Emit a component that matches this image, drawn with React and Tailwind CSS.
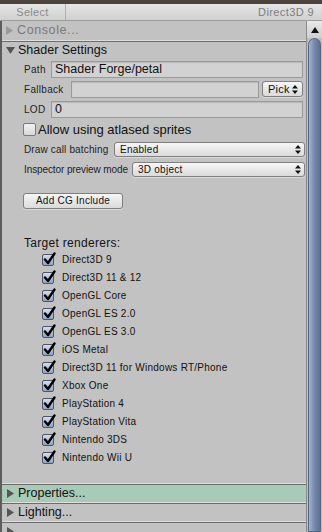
import React from 'react';

const RENDERERS = [
  'Direct3D 9',
  'Direct3D 11 & 12',
  'OpenGL Core',
  'OpenGL ES 2.0',
  'OpenGL ES 3.0',
  'iOS Metal',
  'Direct3D 11 for Windows RT/Phone',
  'Xbox One',
  'PlayStation 4',
  'PlayStation Vita',
  'Nintendo 3DS',
  'Nintendo Wii U',
];

function Tri({ down, color = '#555' }) {
  return down ? (
    <svg width="9" height="9" viewBox="0 0 9 9" className="shrink-0">
      <path d="M0 1 L9 1 L4.5 8 Z" fill={color} />
    </svg>
  ) : (
    <svg width="9" height="9" viewBox="0 0 9 9" className="shrink-0">
      <path d="M1 0 L8 4.5 L1 9 Z" fill={color} />
    </svg>
  );
}

function UpDown() {
  return (
    <svg width="6" height="9" viewBox="0 0 6 9" className="shrink-0">
      <path d="M3 0 L6 3.5 L0 3.5 Z" fill="#111" />
      <path d="M3 9 L6 5.5 L0 5.5 Z" fill="#111" />
    </svg>
  );
}

function Check() {
  return (
    <div className="relative w-[12px] h-[12px] rounded-[2px] border border-[#4d5566] bg-gradient-to-b from-[#d4deee] to-[#8ea4c4] shrink-0">
      <svg width="14" height="14" viewBox="0 0 14 14" className="absolute left-[0px] top-[-3px]">
        <path d="M2 7.5 L5 11 L11.5 1.5" fill="none" stroke="#000" strokeWidth="2.4" strokeLinecap="round" strokeLinejoin="round" />
      </svg>
    </div>
  );
}

function Foldout({ label, open, green }) {
  return (
    <div className={`border-t border-t-[#dedede] ${green ? 'bg-[#a8cbb7]' : ''}`}>
      <div className="border-t border-t-[#6c6c6c] h-[18px] flex items-center gap-[3px] pl-[4px]">
        <Tri down={open} color="#555" />
        <span className="text-[12.5px] text-[#111] whitespace-nowrap">{label}</span>
      </div>
    </div>
  );
}

const labelCls = 'shrink-0 whitespace-nowrap overflow-hidden text-[10px] text-[#222] pl-[1px]';
const inputCls = 'h-[17px] min-w-0 border border-[#9a9a9a] bg-[#d2d2d2] shadow-[inset_0_1px_1px_rgba(0,0,0,0.12)] flex items-center px-[3px] text-[12.5px] text-[#111] whitespace-nowrap';
const btnCls = 'shrink-0 rounded-[3px] border border-[#7f7f7f] bg-gradient-to-b from-[#f6f6f6] to-[#dadada] shadow-[0_1px_0_rgba(255,255,255,0.4)] flex items-center text-[10px] tracking-[0.25px] text-[#111] whitespace-nowrap';

export default function App() {
  return (
    <div className="w-[322px] h-[532px] overflow-hidden flex flex-col bg-[#c2c2c2] font-['Liberation_Sans',Arial,sans-serif] select-none">
      <div className="h-[4px] bg-[#4b433c] shrink-0" />
      <div className="h-[17px] shrink-0 flex items-center bg-gradient-to-b from-[#e6e6e6] to-[#d0d0d0] border-b border-[#9d9d9d]">
        <div className="w-[66px] h-full flex items-center justify-center border-r border-[#b0b0b0] text-[11px] text-[#8a8a8a] tracking-[0.3px]">Select</div>
        <div className="flex-1 text-right pr-[8px] text-[11px] text-[#7d7d7d] tracking-[0.4px]">Direct3D 9</div>
      </div>
      <div className="flex-1 flex min-h-0">
        <div className="flex-1 flex flex-col border-l-2 border-[#5d5d5d] min-w-0">
          <div className="h-[20px] flex items-center gap-[3px] pl-[3px]">
            <Tri color="#9a9a9a" />
            <span className="text-[12.5px] text-[#7a7a7a] tracking-[0.6px]">Console...</span>
          </div>
          <Foldout label="Shader Settings" open />
          <div className="flex flex-col pl-[21px] pr-[3px] pt-[2px]">
            <div className="flex items-center h-[17px]">
              <span className={`${labelCls} w-[28px] tracking-[0.3px]`}>Path</span>
              <div className={`${inputCls} flex-1`}>Shader Forge/petal</div>
            </div>
            <div className="flex items-center h-[17px] mt-[3px]">
              <span className={`${labelCls} w-[48px] tracking-[0.3px]`}>Fallback</span>
              <div className={`${inputCls} flex-1`} />
              <div className={`${btnCls} ml-[3px] w-[41px] h-[16px] justify-between pl-[5px] pr-[4px] text-[11px]`}>
                <span>Pick</span>
                <UpDown />
              </div>
            </div>
            <div className="flex items-center h-[17px] mt-[3px]">
              <span className={`${labelCls} w-[28px] tracking-[0.3px]`}>LOD</span>
              <div className={`${inputCls} flex-1`}>0</div>
            </div>
            <div className="flex items-center h-[16px] mt-[4px] gap-[2px]">
              <div className="w-[13px] h-[13px] shrink-0 rounded-[2px] border border-[#7a7a7a] bg-gradient-to-b from-[#f2f2f2] to-[#d8d8d8]" />
              <span className="text-[13px] text-[#111] whitespace-nowrap">Allow using atlased sprites</span>
            </div>
            <div className="flex items-center h-[15px] mt-[4px]">
              <span className={`${labelCls} w-[91px] tracking-[0.15px]`}>Draw call batching</span>
              <div className={`${btnCls} flex-1 h-[15px] justify-between pl-[5px] pr-[3px] mr-[-2px]`}>
                <span>Enabled</span>
                <UpDown />
              </div>
            </div>
            <div className="flex items-center h-[15px] mt-[5px]">
              <span className={`${labelCls} w-[109px] tracking-[-0.1px]`}>Inspector preview mode</span>
              <div className={`${btnCls} flex-1 h-[15px] justify-between pl-[5px] pr-[3px] mr-[-2px]`}>
                <span>3D object</span>
                <UpDown />
              </div>
            </div>
            <div className={`${btnCls} w-[100px] h-[16px] justify-center mt-[16px]`}>Add CG Include</div>
            <div className="mt-[27px] text-[12px] text-[#111] tracking-[0.3px] pl-[1px] leading-[14px]">Target renderers:</div>
            <div className="flex flex-col mt-[1px] pl-[19px]">
              {RENDERERS.map(r => (
                <div key={r} className="h-[18px] flex items-center gap-[8px]">
                  <Check />
                  <span className="text-[10px] text-[#111] tracking-[0.25px] whitespace-nowrap">{r}</span>
                </div>
              ))}
            </div>
          </div>
          <div className="mt-[16px]">
            <Foldout label="Properties..." green />
            <Foldout label="Lighting..." />
            <Foldout label="" />
          </div>
        </div>
        <div className="w-[16px] shrink-0 flex flex-col bg-[#bdbdbd] border-l border-[#8c8c8c]">
          <div className="h-[17px] flex items-center justify-center bg-gradient-to-b from-[#e8e8e8] to-[#cfcfcf]">
            <svg width="8" height="6" viewBox="0 0 8 6">
              <path d="M4 0 L8 6 L0 6 Z" fill="#111" />
            </svg>
          </div>
          <div className="flex-1 mx-[1px] rounded-t-[7px] border border-[#56688a] bg-gradient-to-r from-[#a7b3c9] via-[#7489ad] to-[#5d7194]" />
        </div>
      </div>
    </div>
  );
}
